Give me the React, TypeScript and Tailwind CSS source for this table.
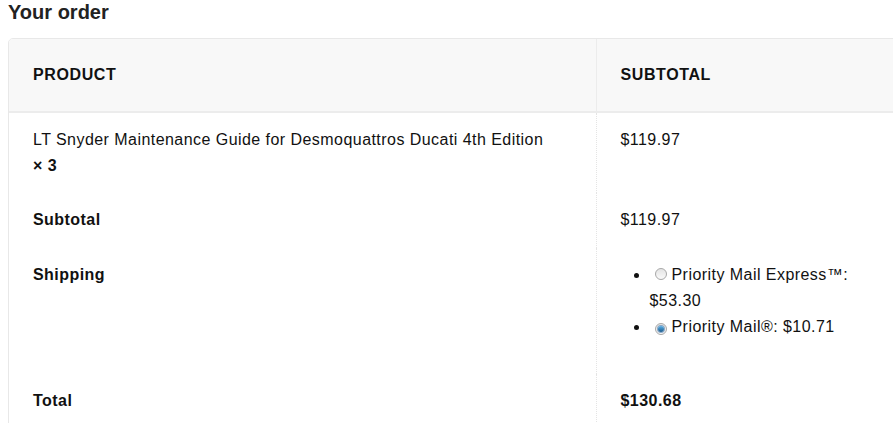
import React from 'react';

const Radio = ({ checked }: { checked?: boolean }) => (
  <span className="ml-[5px] mr-[5px] inline-flex h-[12px] w-[12px] items-center justify-center rounded-full border border-[#a8a8a8] bg-gradient-to-b from-[#e4e4e4] to-[#fafafa] align-baseline">
    {checked && (
      <span className="h-[6px] w-[6px] rounded-full bg-gradient-to-b from-[#5ab0e8] to-[#1c5b8c] shadow-[0_0_0_1px_rgba(40,100,160,0.5)]" />
    )}
  </span>
);

export default function App() {
  return (
    <div className="h-[423px] w-[893px] overflow-hidden bg-white font-['Liberation_Sans',Arial,sans-serif] text-[16px] text-[#111]">
      <div className="pl-[8px]">
        <h3 className="text-[20px] font-bold leading-[24px] text-[#222]">Your order</h3>

        <div className="mt-[14px] w-[920px] overflow-hidden rounded-tl-[5px] border border-[#e8e8e8]">
          <table className="w-full table-fixed border-collapse">
            <colgroup>
              <col className="w-[587px]" />
              <col />
            </colgroup>
            <thead>
              <tr className="bg-[#f8f8f8]">
                <th className="border-b-2 border-[#ececec] px-[24px] pt-[25px] pb-[26px] text-left text-[16px] leading-[21px] font-bold tracking-[0.6px] text-[#111]">
                  PRODUCT
                </th>
                <th className="border-b-2 border-l border-[#ececec] px-[24px] pt-[25px] pb-[26px] text-left text-[16px] leading-[21px] font-bold tracking-[0.6px] text-[#111]">
                  SUBTOTAL
                </th>
              </tr>
            </thead>
            <tbody className="leading-[26px] tracking-[0.45px]">
              <tr>
                <td className="px-[24px] py-[14px] align-top">
                  LT Snyder Maintenance Guide for Desmoquattros Ducati 4th Edition
                  <br />
                  <strong>× 3</strong>
                </td>
                <td className="border-l border-dotted border-[#e4e4e4] px-[24px] py-[14px] align-top">$119.97</td>
              </tr>
              <tr>
                <th className="px-[24px] pt-[14px] pb-[15px] text-left align-top font-bold">Subtotal</th>
                <td className="border-l border-dotted border-[#e4e4e4] px-[24px] pt-[14px] pb-[15px] align-top">$119.97</td>
              </tr>
              <tr>
                <th className="px-[24px] py-[14px] text-left align-top font-bold">Shipping</th>
                <td className="border-l border-dotted border-[#e4e4e4] py-[14px] pr-[60px] pl-[24px] align-top">
                  <ul className="mb-[20px] list-disc pl-[29px]">
                    <li>
                      <Radio />
                      Priority Mail Express™: $53.30
                    </li>
                    <li>
                      <Radio checked />
                      Priority Mail®: $10.71
                    </li>
                  </ul>
                </td>
              </tr>
              <tr>
                <th className="px-[24px] py-[14px] text-left align-top font-bold">Total</th>
                <td className="border-l border-dotted border-[#e4e4e4] px-[24px] py-[14px] align-top font-bold">$130.68</td>
              </tr>
            </tbody>
          </table>
        </div>
      </div>
    </div>
  );
}
